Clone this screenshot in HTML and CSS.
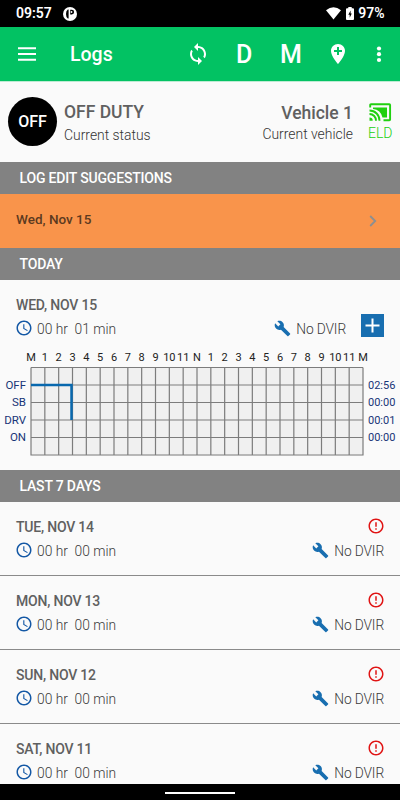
FILE: index.html
```html
<!DOCTYPE html>
<html lang="en">
<head>
<meta charset="utf-8">
<meta name="viewport" content="width=device-width, initial-scale=1">
<title>Logs</title>
<link rel="stylesheet" href="styles.css">
</head>
<body>
<svg class="defs" width="0" height="0" aria-hidden="true">
  <symbol id="clock" viewBox="0 0 24 24"><path fill="currentColor" d="M11.99 2C6.47 2 2 6.48 2 12s4.47 10 9.99 10C17.52 22 22 17.52 22 12S17.52 2 11.99 2zM12 20c-4.42 0-8-3.58-8-8s3.58-8 8-8 8 3.58 8 8-3.58 8-8 8zm.5-13H11v6l5.25 3.15.75-1.23-4.5-2.67z"/></symbol>
  <symbol id="wrench" viewBox="0 0 24 24"><path fill="currentColor" d="M22.7 19l-9.1-9.1c.9-2.3.4-5-1.5-6.9-2-2-5-2.4-7.4-1.3L9 6 6 9 1.6 4.7C.4 7.1.9 10.1 2.9 12.1c1.9 1.9 4.6 2.4 6.9 1.5l9.1 9.1c.4.4 1 .4 1.4 0l2.3-2.3c.5-.4.5-1.1.1-1.4z"/></symbol>
  <symbol id="alert" viewBox="0 0 24 24"><path fill="currentColor" d="M11 15h2v2h-2zm0-8h2v6h-2zm.99-5C6.47 2 2 6.48 2 12s4.47 10 9.99 10C17.52 22 22 17.52 22 12S17.52 2 11.99 2zM12 20c-4.42 0-8-3.58-8-8s3.58-8 8-8 8 3.58 8 8-3.58 8-8 8z"/></symbol>
</svg>
<div class="screen">
  <div class="statusbar">
    <span class="time">09:57</span>
    <svg class="app-dot" width="14" height="14" viewBox="0 0 14 14"><circle cx="7" cy="7" r="7" fill="#fff"/><path d="M5.600 2.600v8.800H4.800Q3 10.200 3 7T4.800 2.600zM7.200 2.800h1.600a2.300 2.300 0 0 1 0 4.600H7.200z" fill="#000"/><circle cx="8.500" cy="5" r=".9" fill="#fff"/></svg>
    <span class="spacer"></span>
    <svg class="wifi" width="15" height="13" viewBox="0 0 15 13"><path fill="#fff" d="M0 3.300Q7.500-2.700 15 3.300L7.500 12.500z"/></svg>
    <svg class="battery" width="8" height="13" viewBox="0 0 8 13"><path fill="#fff" d="M2.300 0h3.400v1.300H7q1 0 1 1V12q0 1-1 1H1q-1 0-1-1V2.300q0-1 1-1h1.300z"/><path fill="#000" d="M4.600 3.500L2.300 7.700h1.400v3L5.800 6.500H4.600z"/></svg>
    <span class="percent">97%</span>
  </div>
  <header class="appbar">
    <svg class="menu" width="18" height="14" viewBox="0 0 18 14"><path d="M0 1.200h18M0 7h18M0 12.700h18" stroke="#fff" stroke-width="2"/></svg>
    <h1>Logs</h1>
    <span class="spacer"></span>
    <svg class="sync" width="24" height="24" viewBox="0 0 24 24"><path fill="#fff" d="M12 4V1L8 5l4 4V6c3.310 0 6 2.690 6 6 0 1.010-.25 1.970-.7 2.800l1.460 1.460C19.540 15.030 20 13.570 20 12c0-4.420-3.580-8-8-8zm0 14c-3.310 0-6-2.690-6-6 0-1.010.25-1.970.7-2.800L5.240 7.740C4.460 8.970 4 10.430 4 12c0 4.420 3.580 8 8 8v3l4-4-4-4v3z"/></svg>
    <span class="letter letter-d">D</span>
    <span class="letter letter-m">M</span>
    <svg class="pin" width="24" height="24" viewBox="0 0 24 24"><path fill="#fff" d="M12 2C8.140 2 5 5.140 5 9c0 5.250 7 13 7 13s7-7.750 7-13c0-3.860-3.140-7-7-7zm4 8h-3v3h-2v-3H8V8h3V5h2v3h3v2z"/></svg>
    <svg class="more" width="6" height="18" viewBox="0 0 6 18"><g fill="#fff"><circle cx="3" cy="3.500" r="2.100"/><circle cx="3" cy="9.200" r="2.100"/><circle cx="3" cy="15" r="2.100"/></g></svg>
  </header>
  <section class="summary">
    <div class="badge">OFF</div>
    <div class="info">
      <strong>OFF DUTY</strong>
      <span>Current status</span>
    </div>
    <div class="info vehicle">
      <strong>Vehicle 1</strong>
      <span>Current vehicle</span>
    </div>
    <div class="eld">
      <svg width="24" height="20" viewBox="0 0 24 20"><path fill="#20d010" d="M5 5.500h14v10h-4.500A11 11 0 0 0 5 7z"/><path d="M2.200 5.500V3q0-.8.8-.8h18.300q.8 0 .8.800v14.500q0 .8-.8.800H15.500M1.500 8.500A10 10 0 0 1 11.500 18.800M1.500 12A6.500 6.500 0 0 1 8 18.800" fill="none" stroke="#20d010" stroke-width="1.900"/><path d="M1.500 15.500a3.200 3.200 0 0 1 3.200 3.300H1.500z" fill="#20d010"/></svg>
      <span>ELD</span>
    </div>
  </section>
  <h2 class="section">LOG EDIT SUGGESTIONS</h2>
  <div class="suggestion">
    <span>Wed, Nov 15</span>
    <svg width="8" height="12" viewBox="0 0 8 12"><path d="M1.200 1l5 5-5 5" fill="none" stroke="#8c8f91" stroke-width="1.800"/></svg>
  </div>
  <h2 class="section">TODAY</h2>
  <section class="today">
    <div class="log">
      <div class="log-head"><b>WED, NOV 15</b></div>
      <div class="log-line">
        <svg class="clock"><use href="#clock"/></svg><span class="dur">00 hr&nbsp; 01 min</span>
        <span class="spacer"></span>
        <svg class="wrench"><use href="#wrench"/></svg><span class="dvir">No DVIR</span>
        <span class="add"><svg width="15" height="15" viewBox="0 0 15 15"><path d="M7.500 .5v14M.5 7.500h14" stroke="#fff" stroke-width="2"/></svg></span>
      </div>
    </div>
    <svg class="chart" width="400" height="122" viewBox="0 348 400 122">
      <rect x="31" y="367.500" width="332" height="88" fill="#f0f0f0"/>
      <path id="grid" fill="none" stroke="#7c7c7c" stroke-width="1.200"/>
      <g id="hours" class="hours"></g>
      <g class="rows rows-left">
        <text x="26" y="388.500">OFF</text><text x="26" y="406">SB</text><text x="26" y="423.500">DRV</text><text x="26" y="441">ON</text>
      </g>
      <g class="rows rows-right">
        <text x="368" y="388.500">02:56</text><text x="368" y="406">00:00</text><text x="368" y="423.500">00:01</text><text x="368" y="441">00:00</text>
      </g>
      <path d="M31 385h40.500v35" fill="none" stroke="#0868ae" stroke-width="2.500"/>
    </svg>
  </section>
  <h2 class="section">LAST 7 DAYS</h2>
  <section class="days">
    <article class="log">
      <div class="log-head"><b>TUE, NOV 14</b><svg class="alert"><use href="#alert"/></svg></div>
      <div class="log-line"><svg class="clock"><use href="#clock"/></svg><span class="dur">00 hr&nbsp; 00 min</span><span class="spacer"></span><svg class="wrench"><use href="#wrench"/></svg><span class="dvir">No DVIR</span></div>
    </article>
    <article class="log">
      <div class="log-head"><b>MON, NOV 13</b><svg class="alert"><use href="#alert"/></svg></div>
      <div class="log-line"><svg class="clock"><use href="#clock"/></svg><span class="dur">00 hr&nbsp; 00 min</span><span class="spacer"></span><svg class="wrench"><use href="#wrench"/></svg><span class="dvir">No DVIR</span></div>
    </article>
    <article class="log">
      <div class="log-head"><b>SUN, NOV 12</b><svg class="alert"><use href="#alert"/></svg></div>
      <div class="log-line"><svg class="clock"><use href="#clock"/></svg><span class="dur">00 hr&nbsp; 00 min</span><span class="spacer"></span><svg class="wrench"><use href="#wrench"/></svg><span class="dvir">No DVIR</span></div>
    </article>
    <article class="log">
      <div class="log-head"><b>SAT, NOV 11</b><svg class="alert"><use href="#alert"/></svg></div>
      <div class="log-line"><svg class="clock"><use href="#clock"/></svg><span class="dur">00 hr&nbsp; 00 min</span><span class="spacer"></span><svg class="wrench"><use href="#wrench"/></svg><span class="dvir">No DVIR</span></div>
    </article>
  </section>
  <footer class="navbar"><span></span></footer>
</div>
<script src="chart.js"></script>
</body>
</html>
```
FILE: styles.css
```css
* { box-sizing: border-box; }
body { margin: 0; background: #fafafa; font-family: Roboto, "Liberation Sans", sans-serif; color: #606060; }
h1, h2 { margin: 0; }
svg { display: block; flex: none; }
.defs { position: absolute; }
.screen { width: 400px; height: 800px; display: flex; flex-direction: column; overflow: hidden; }
.screen > * { flex: none; }
.spacer { flex: 1; }

.statusbar { height: 27px; background: #000; color: #fff; display: flex; align-items: center; padding: 0 15.500px 0 16px; font: 600 14px/27px Roboto, sans-serif; }
.time { width: 47px; }
.wifi { margin-right: 5px; }
.battery { margin-right: 4px; }

.appbar { height: 54px; background: #02c263; color: #fff; display: flex; align-items: center; padding: 0 18px; }
.appbar h1 { margin-left: 34px; font-size: 19.500px; font-weight: 500; line-height: 54px; padding-top: 2px; }
.letter { font-size: 25px; font-weight: 500; text-align: center; }
.letter-d { width: 16px; margin-left: 26px; }
.letter-m { width: 22px; margin-left: 28px; }
.pin { margin-left: 24px; }
.more { margin: 0 0 0 26px; }

.summary { height: 81px; border-top: 1px solid #bdebd3; display: flex; padding: 0 8px; }
.badge { width: 49px; height: 49px; margin-top: 15px; border-radius: 50%; background: #000; color: #fff; display: flex; align-items: center; justify-content: center; font-size: 16px; font-weight: 500; }
.info { margin: 19px 0 0 7px; display: flex; flex-direction: column; }
.info strong { font-size: 17.500px; font-weight: 500; line-height: 23px; }
.info span { font-size: 13.900px; font-weight: 300; line-height: 22px; color: #333; }
.vehicle { margin-left: auto; text-align: right; }
.vehicle strong { padding-top: 1px; line-height: 22px; }
.vehicle span { line-height: 20px; }
.eld { margin: 20px 0 0 15px; width: 24px; text-align: center; }
.eld span { display: block; font-size: 14px; line-height: 22px; color: #20d010; font-weight: 300; }

.section { height: 32px; background: #828282; color: #fff; padding-left: 19.500px; font-size: 14px; letter-spacing: -.18px; line-height: 33px; font-weight: 500; }
.suggestion { height: 54px; background: #f9944b; display: flex; align-items: center; justify-content: space-between; padding: 0 23px 0 16px; font-size: 13.500px; font-weight: 500; color: #5c3a20; }
.suggestion span { padding-bottom: 5px; }

.log { height: 74px; padding: 14px 16px 0; border-bottom: 1px solid #8a8a8a; }
.log-head { height: 22px; display: flex; align-items: center; justify-content: space-between; }
.log-head b { font-size: 14px; letter-spacing: -.2px; font-weight: 500; line-height: 22px; }
.log-line { height: 24px; display: flex; align-items: center; font-size: 13.800px; font-weight: 300; color: #3a3a3a; }
.log-line > span { padding-top: 1px; }
.clock { width: 18px; height: 18px; margin-left: -1px; color: #1458a5; }
.dur { margin-left: 4px; }
.dvir { letter-spacing: -.15px; }
.wrench { width: 17px; height: 17px; color: #186eb0; margin-right: 5px; }
.alert { width: 18px; height: 18px; margin: -3px -1px 0 0; color: #e01414; }

.today { height: 190px; }
.today .log { height: 68px; border: 0; padding-right: 16px; }
.log-line > .add { width: 23px; height: 23px; margin: -5px 0 0 15px; padding: 0; background: #186eb0; display: flex; align-items: center; justify-content: center; }
.hours { font-size: 11px; fill: #222; text-anchor: middle; }
.rows { font-size: 11.500px; fill: #183577; }
.rows-left { text-anchor: end; }
.rows-right { font-size: 11px; }

.days { height: 282px; overflow: hidden; }
.navbar { height: 16px; background: #000; display: flex; justify-content: center; padding-top: 8px; }
.navbar span { width: 70px; height: 2px; background: #fff; }
```
FILE: chart.js
```js
var left = 31, top0 = 367.5, step = 332 / 24, row = 17.5;
var d = '';
for (var i = 0; i <= 24; i++) {
  d += 'M' + (left + i * step).toFixed(2) + ' ' + top0 + 'v88';
}
for (var j = 0; j <= 5; j++) {
  d += 'M' + left + ' ' + (top0 + j * row) + 'h332';
}
document.getElementById('grid').setAttribute('d', d);

var hours = document.getElementById('hours');
for (var h = 0; h <= 24; h++) {
  var t = document.createElementNS('http://www.w3.org/2000/svg', 'text');
  t.setAttribute('x', (left + h * step).toFixed(2));
  t.setAttribute('y', 361);
  t.textContent = h % 24 === 0 ? 'M' : h === 12 ? 'N' : h % 12;
  hours.appendChild(t);
}
```
